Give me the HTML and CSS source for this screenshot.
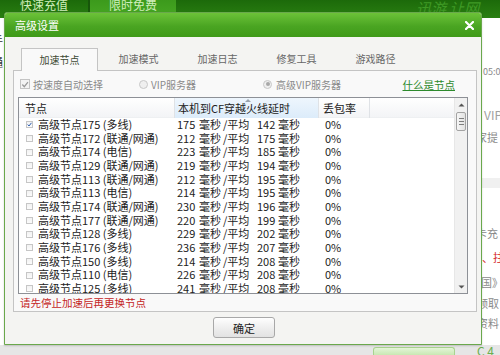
FILE: index.html
```html
<!DOCTYPE html>
<html lang="zh-CN">
<head>
<meta charset="utf-8">
<title>高级设置</title>
<link rel="stylesheet" href="styles.css">
</head>
<body>
<div class="app">
  <div class="topbar">
    <div class="navtab">快速充值</div>
    <div class="navsep"></div>
    <div class="navtab active">限时免费</div>
    <div class="slogan">迅游 让网</div>
  </div>
  <div class="main">
    <div class="leftcol">
      <span class="lf l1">手</span>
      <span class="lf l2">通</span>
    </div>
    <div class="rightcol">
      <span class="rt r1">05:0</span>
      <span class="rt r2">VIP</span>
      <span class="rt r3">家提</span>
      <span class="rband"></span>
      <span class="rt r4">卡充</span>
      <span class="rt r5">、拄</span>
      <span class="rt r6">国》</span>
      <span class="rt r7">领取</span>
      <span class="rt r8">资料</span>
    </div>
  </div>
  <div class="bottombar">
    <div class="bb-btn"></div>
    <div class="bb-txt">C 4</div>
  </div>
</div>

<div class="dialog">
  <div class="titlebar">
    <span class="title">高级设置</span>
    <svg class="close" width="9" height="9" viewBox="0 0 9 9"><path d="M1 1L8 8M8 1L1 8" stroke="#fff" stroke-width="2.2" stroke-linecap="round"/></svg>
  </div>
  <div class="body">
    <div class="tabs">
      <div class="tab active">加速节点</div>
      <div class="tab">加速模式</div>
      <div class="tab">加速日志</div>
      <div class="tab">修复工具</div>
      <div class="tab">游戏路径</div>
    </div>
    <div class="panel">
      <div class="options">
        <div class="opt opt1"><span class="obox"><svg width="9" height="9" viewBox="0 0 9 9"><path d="M1.5 4.5L3.7 7L7.8 1.8" fill="none" stroke="#9a9a9a" stroke-width="1.4"/></svg></span>按速度自动选择</div>
        <div class="opt opt2"><span class="oradio"></span>VIP服务器</div>
        <div class="opt opt3"><span class="oradio on"></span>高级VIP服务器</div>
        <a class="link">什么是节点</a>
      </div>
      <div class="list">
        <div class="table">
          <div class="head">
            <div class="hc">节点</div>
            <div class="hc sorted">本机到CF穿越火线延时<span class="sortmark"></span></div>
            <div class="hc">丢包率</div>
            <div class="hc last"></div>
          </div>
          <div class="row"><div class="c1"><span class="cb"><svg width="7" height="7" viewBox="0 0 7 7"><path d="M1 3.5L2.8 5.6L6.2 1.2" fill="none" stroke="#2f5fb0" stroke-width="1.4"/></svg></span>高级节点175 (多线)</div><div class="c2"><span class="n">175</span><span class="u">毫秒</span><span class="a">/平均</span><span class="n2">142</span>毫秒</div><div class="c3">0%</div></div>
          <div class="row"><div class="c1"><span class="cb"></span>高级节点172 (联通/网通)</div><div class="c2"><span class="n">212</span><span class="u">毫秒</span><span class="a">/平均</span><span class="n2">175</span>毫秒</div><div class="c3">0%</div></div>
          <div class="row"><div class="c1"><span class="cb"></span>高级节点174 (电信)</div><div class="c2"><span class="n">223</span><span class="u">毫秒</span><span class="a">/平均</span><span class="n2">185</span>毫秒</div><div class="c3">0%</div></div>
          <div class="row"><div class="c1"><span class="cb"></span>高级节点129 (联通/网通)</div><div class="c2"><span class="n">219</span><span class="u">毫秒</span><span class="a">/平均</span><span class="n2">194</span>毫秒</div><div class="c3">0%</div></div>
          <div class="row"><div class="c1"><span class="cb"></span>高级节点113 (联通/网通)</div><div class="c2"><span class="n">212</span><span class="u">毫秒</span><span class="a">/平均</span><span class="n2">195</span>毫秒</div><div class="c3">0%</div></div>
          <div class="row"><div class="c1"><span class="cb"></span>高级节点113 (电信)</div><div class="c2"><span class="n">214</span><span class="u">毫秒</span><span class="a">/平均</span><span class="n2">195</span>毫秒</div><div class="c3">0%</div></div>
          <div class="row"><div class="c1"><span class="cb"></span>高级节点174 (联通/网通)</div><div class="c2"><span class="n">230</span><span class="u">毫秒</span><span class="a">/平均</span><span class="n2">196</span>毫秒</div><div class="c3">0%</div></div>
          <div class="row"><div class="c1"><span class="cb"></span>高级节点177 (联通/网通)</div><div class="c2"><span class="n">220</span><span class="u">毫秒</span><span class="a">/平均</span><span class="n2">199</span>毫秒</div><div class="c3">0%</div></div>
          <div class="row"><div class="c1"><span class="cb"></span>高级节点128 (多线)</div><div class="c2"><span class="n">229</span><span class="u">毫秒</span><span class="a">/平均</span><span class="n2">202</span>毫秒</div><div class="c3">0%</div></div>
          <div class="row"><div class="c1"><span class="cb"></span>高级节点176 (多线)</div><div class="c2"><span class="n">236</span><span class="u">毫秒</span><span class="a">/平均</span><span class="n2">207</span>毫秒</div><div class="c3">0%</div></div>
          <div class="row"><div class="c1"><span class="cb"></span>高级节点150 (多线)</div><div class="c2"><span class="n">214</span><span class="u">毫秒</span><span class="a">/平均</span><span class="n2">208</span>毫秒</div><div class="c3">0%</div></div>
          <div class="row"><div class="c1"><span class="cb"></span>高级节点110 (电信)</div><div class="c2"><span class="n">226</span><span class="u">毫秒</span><span class="a">/平均</span><span class="n2">208</span>毫秒</div><div class="c3">0%</div></div>
          <div class="row"><div class="c1"><span class="cb"></span>高级节点125 (多线)</div><div class="c2"><span class="n">241</span><span class="u">毫秒</span><span class="a">/平均</span><span class="n2">208</span>毫秒</div><div class="c3">0%</div></div>
        </div>
        <div class="scrollbar">
          <div class="sb-btn"><svg width="7" height="4" viewBox="0 0 7 4"><path d="M0.5 3.5L3.5 0.5L6.5 3.5Z" fill="#555"/></svg></div>
          <div class="sb-thumb"><i></i><i></i><i></i></div>
          <div class="sb-track"></div>
          <div class="sb-btn"><svg width="7" height="4" viewBox="0 0 7 4"><path d="M0.5 0.5L3.5 3.5L6.5 0.5Z" fill="#555"/></svg></div>
        </div>
      </div>
      <div class="warn">请先停止加速后再更换节点</div>
    </div>
    <div class="footer">
      <button class="ok">确定</button>
    </div>
  </div>
</div>
</body>
</html>
```

FILE: styles.css
```css
* { box-sizing: border-box; margin: 0; padding: 0; }
html, body { width: 500px; height: 355px; overflow: hidden; }
body {
  font-family: "Noto Sans CJK SC", "Noto Sans", sans-serif;
  font-size: 11px;
  color: #222;
  background: #fff;
  position: relative;
}

/* background application */
.app {
  width: 500px;
  height: 355px;
  display: grid;
  grid-template-rows: 18px 1fr 10px;
}
.topbar {
  display: flex;
  background: linear-gradient(#1c6a0a, #2a7f12);
  color: #cfeebb;
  font-size: 12px;
  line-height: 10px;
  overflow: hidden;
}
.navtab { width: 88px; text-align: center; height: 18px; }
.navsep { width: 2px; background: #17560a; }
.navtab.active { width: 86px; background: linear-gradient(#3c9a1c, #48a824); }
.slogan {
  margin-left: auto;
  margin-right: -6px;
  width: 90px;
  font-style: italic;
  font-size: 15px;
  line-height: 16px;
  color: #3f9a25;
}
.main { display: flex; justify-content: space-between; }
.leftcol {
  width: 4px;
  overflow: hidden;
  display: flex;
  flex-direction: column;
}
.lf { margin-left: -8px; font-size: 11px; line-height: 12px; color: #333; }
.l1 { margin-top: 16px; }
.l2 { margin-top: 10px; }
.rightcol {
  width: 20px;
  overflow: hidden;
  display: flex;
  flex-direction: column;
  font-size: 11px;
  line-height: 14px;
  color: #8a8a8a;
  white-space: nowrap;
}
.rt { height: 14px; display: block; }
.r1 { margin-top: 47px; font-size: 9px; margin-left: 3px; }
.r2 { margin-top: 29px; font-size: 12px; margin-left: 4px; color: #a0a0a0; }
.r3 { margin-top: 8px; margin-left: -4px; }
.rband { display: block; margin-top: 34px; height: 10px; background: #f0f0f0; }
.r4 { margin-top: 38px; margin-left: -4px; }
.r5 { margin-top: 10px; color: #d22020; margin-left: 2px; }
.r6 { margin-top: 11px; margin-left: 1px; }
.r7 { margin-top: 7px; margin-left: -3px; }
.r8 { margin-top: 6px; margin-left: -3px; }
.bottombar {
  display: flex;
  align-items: flex-end;
  background: #e6e6e6;
  padding-left: 373px;
}
.bb-btn {
  width: 82px;
  height: 8px;
  border: 1px solid #a9d38f;
  border-bottom: none;
  border-radius: 3px 3px 0 0;
  background: linear-gradient(#e4f5d8, #c9e8b3);
}
.bb-txt { margin-left: 22px; color: #6cae4e; font-size: 12px; line-height: 9px; }

/* dialog window */
.dialog {
  position: absolute;
  left: 4px;
  top: 12px;
  width: 478px;
  height: 333px;
  border: 1px solid #6aa84c;
  border-radius: 3px 3px 0 0;
  background: #f4f4f2;
  box-shadow: 0 1px 2px rgba(0,0,0,0.18);
  display: flex;
  flex-direction: column;
}
.titlebar {
  height: 24px;
  display: flex;
  align-items: center;
  justify-content: space-between;
  padding: 0 7px 0 10px;
  background: linear-gradient(#6cc238, #4aa522 55%, #3f9a19);
  border-radius: 2px 2px 0 0;
  color: #fff;
  font-size: 11px;
}
.close { display: block; }

.body {
  flex: 1;
  padding: 11px 4px 0 8px;
  display: flex;
  flex-direction: column;
}
.tabs { display: flex; height: 22px; padding-left: 7px; }
.tab {
  width: 79px;
  text-align: center;
  line-height: 22px;
  font-size: 10px;
  color: #666;
}
.tab.active {
  width: 77px;
  margin: 0 1px;
  height: 23px;
  margin-bottom: -1px;
  background: #f9f9f9;
  border: 1px solid #c4c4c4;
  border-bottom: none;
  color: #3d4a35;
  line-height: 21px;
  position: relative;
  z-index: 1;
}
.panel {
  height: 242px;
  border: 1px solid #c4c4c4;
  background: #f9f9f9;
  padding: 0 8px 0 4px;
  display: flex;
  flex-direction: column;
}
.options {
  height: 26px;
  display: flex;
  align-items: center;
  font-size: 10px;
  color: #8a8a8a;
  padding-left: 2px;
}
.opt { display: flex; align-items: center; }
.opt1 { width: 119px; }
.opt2 { width: 124px; }
.obox {
  width: 10px;
  height: 10px;
  border: 1px solid #c4c4c4;
  background: #f3f3f3;
  margin-right: 3px;
  display: flex;
  align-items: center;
  justify-content: center;
}
.oradio {
  width: 9px;
  height: 9px;
  border-radius: 50%;
  border: 1px solid #c8c8c8;
  background: #efefef;
  margin-right: 3px;
  position: relative;
}
.oradio.on::after {
  content: "";
  position: absolute;
  left: 1.5px;
  top: 1.5px;
  width: 4px;
  height: 4px;
  border-radius: 50%;
  background: #a8a8a8;
}
.opt3 .oradio { margin-right: 4px; }
.link {
  margin-left: auto;
  margin-right: 13px;
  color: #2d8a2d;
  text-decoration: underline;
  font-size: 10.5px;
}

.list {
  height: 197px;
  border: 1px solid #8d9096;
  background: #fff;
  display: flex;
}
.table { flex: 1; overflow: hidden; }
.head, .row {
  display: grid;
  grid-template-columns: 156px 144px 51px 1fr;
}
.head {
  height: 20px;
  background: linear-gradient(#ffffff, #f3f4f6);
  border-bottom: 1px solid #eef0f2;
}
.hc {
  border-right: 1px solid #dfe2e6;
  line-height: 20px;
  padding-left: 6px;
  white-space: nowrap;
  position: relative;
}
.hc.sorted {
  padding-left: 3px;
  background: linear-gradient(#eef6fd, #dcecfa);
}
.hc:nth-child(3) { padding-left: 4px; }
.hc.last { border-right: none; }
.sortmark {
  position: absolute;
  left: 70px;
  top: 1px;
  width: 0;
  height: 0;
  border-left: 3px solid transparent;
  border-right: 3px solid transparent;
  border-bottom: 3px solid #9aa3ad;
}
.row {
  height: 13.67px;
  line-height: 13.67px;
  white-space: nowrap;
}
.c1 {
  display: flex;
  align-items: center;
  padding-left: 7px;
}
.cb {
  width: 7px;
  height: 7px;
  border: 1px solid #c6c6c6;
  background: linear-gradient(#f2f2f2, #fbfbfb);
  margin-right: 5px;
  display: flex;
  align-items: center;
  justify-content: center;
}
.c2 { padding-left: 2px; display: flex; }
.n { width: 22px; }
.u { width: 24px; }
.a { width: 34px; }
.n2 { width: 21px; }
.c3 { padding-left: 6px; }

.scrollbar {
  width: 13px;
  background: #f1f1f1;
  border-left: 1px solid #e7e7e7;
  display: flex;
  flex-direction: column;
}
.sb-btn {
  height: 13px;
  display: flex;
  align-items: center;
  justify-content: center;
}
.sb-thumb {
  margin: 1px 1px 0;
  height: 19px;
  border: 1px solid #a3a3a3;
  border-radius: 2px;
  background: linear-gradient(90deg, #f6f6f6, #e2e2e2);
  display: flex;
  flex-direction: column;
  align-items: center;
  justify-content: center;
  gap: 2px;
}
.sb-thumb i { display: block; width: 5px; height: 1px; background: #7d7d7d; }
.sb-track { flex: 1; }

.warn {
  height: 17px;
  line-height: 17px;
  padding-left: 2px;
  color: #c42525;
  font-size: 10.5px;
}
.footer {
  display: flex;
  justify-content: center;
  padding-top: 5px;
}
.ok {
  width: 62px;
  height: 21px;
  border: 1px solid #a8a8a8;
  border-radius: 3px;
  background: linear-gradient(#fefefe, #ececec 60%, #e2e2e2);
  font-family: "Noto Sans CJK SC", sans-serif;
  font-size: 11px;
  color: #222;
  margin-left: -2px;
}
```
